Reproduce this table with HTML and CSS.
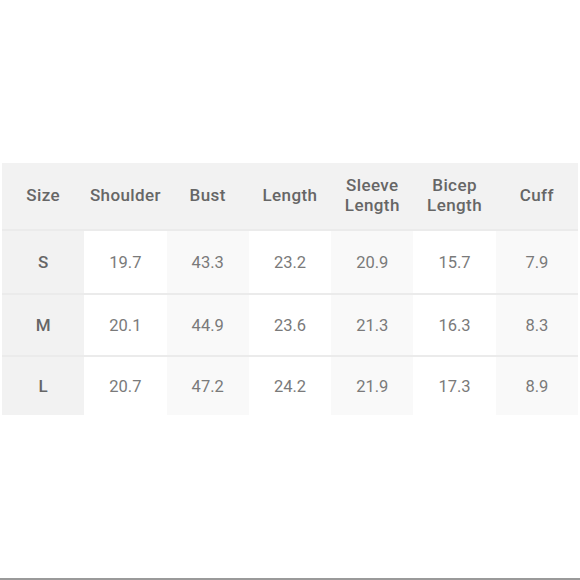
FILE: index.html
```html
<!DOCTYPE html>
<html>
<head>
<meta charset="utf-8">
<link rel="stylesheet" href="styles.css">
</head>
<body>
<div class="page">
  <div class="table">
    <div class="cell head">Size</div>
    <div class="cell head">Shoulder</div>
    <div class="cell head">Bust</div>
    <div class="cell head">Length</div>
    <div class="cell head">Sleeve<br>Length</div>
    <div class="cell head">Bicep<br>Length</div>
    <div class="cell head">Cuff</div>

    <div class="cell size">S</div>
    <div class="cell w">19.7</div>
    <div class="cell g">43.3</div>
    <div class="cell w">23.2</div>
    <div class="cell g">20.9</div>
    <div class="cell w">15.7</div>
    <div class="cell g">7.9</div>

    <div class="cell size">M</div>
    <div class="cell w">20.1</div>
    <div class="cell g">44.9</div>
    <div class="cell w">23.6</div>
    <div class="cell g">21.3</div>
    <div class="cell w">16.3</div>
    <div class="cell g">8.3</div>

    <div class="cell size">L</div>
    <div class="cell w">20.7</div>
    <div class="cell g">47.2</div>
    <div class="cell w">24.2</div>
    <div class="cell g">21.9</div>
    <div class="cell w">17.3</div>
    <div class="cell g">8.9</div>
  </div>
  <div class="bottom-line"></div>
</div>
</body>
</html>
```
FILE: styles.css
```css
html, body {
  margin: 0;
  padding: 0;
  background: #ffffff;
}
.page {
  width: 580px;
  height: 580px;
  display: flex;
  flex-direction: column;
  padding-top: 163px;
  box-sizing: border-box;
}
.table {
  margin-left: 2px;
  width: 576px;
  display: grid;
  grid-template-columns: repeat(7, 1fr);
  grid-template-rows: 66px 62px 60px 58px;
  row-gap: 2px;
  background: #ebebeb;
  font-family: Roboto, "Liberation Sans", sans-serif;
  font-size: 16.5px;
}
.cell {
  display: flex;
  align-items: center;
  justify-content: center;
  text-align: center;
  color: #7a7a7a;
}
.head {
  background: #f2f2f2;
  color: #666666;
  font-size: 17px;
  letter-spacing: 0.4px;
  font-weight: 500;
  line-height: 20px;
  padding-bottom: 2px;
}
.size {
  background: #f2f2f2;
  color: #666666;
  font-size: 17px;
  font-weight: 500;
}
.w {
  background: #ffffff;
}
.g {
  background: #f9f9f9;
}
.bottom-line {
  margin-top: auto;
  height: 2px;
  background: #9a9a9a;
}
```
